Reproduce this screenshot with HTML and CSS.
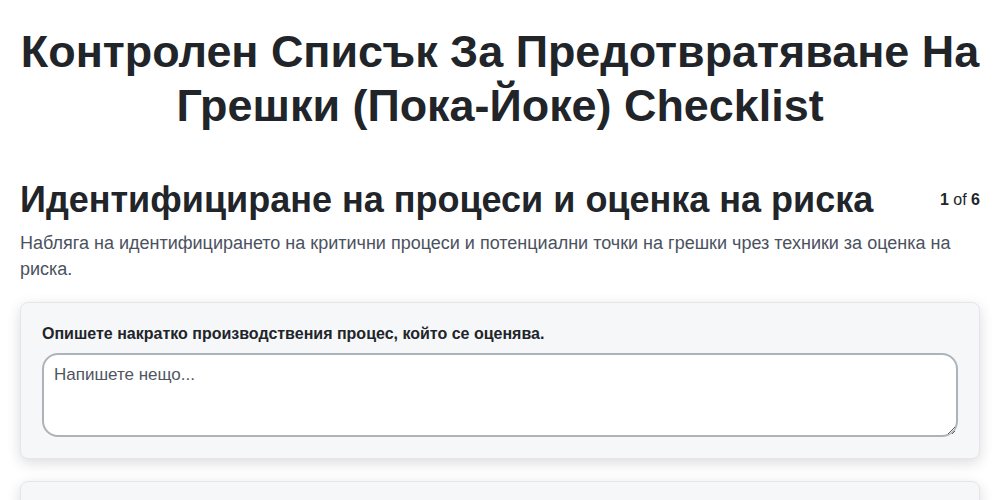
FILE: index.html
```html
<!DOCTYPE html>
<html lang="bg">
<head>
<meta charset="utf-8">
<title>Checklist</title>
<link rel="stylesheet" href="styles.css">
</head>
<body>
<main class="page">
  <h1 class="title">Контролен Списък За Предотвратяване На Грешки (Пока-Йоке) Checklist</h1>
  <section class="section">
    <header class="section-head">
      <h2 class="section-title">Идентифициране на процеси и оценка на риска</h2>
      <div class="pager"><b>1</b> of <b>6</b></div>
    </header>
    <p class="section-desc">Набляга на идентифицирането на критични процеси и потенциални точки на грешки чрез техники за оценка на риска.</p>
    <div class="cards">
      <div class="card">
        <label class="card-label" for="q1">Опишете накратко производствения процес, който се оценява.</label>
        <textarea id="q1" class="field" placeholder="Напишете нещо..."></textarea>
      </div>
      <div class="card">
        <label class="card-label" for="q2">Какви са основните етапи на процеса?</label>
        <textarea id="q2" class="field" placeholder="Напишете нещо..."></textarea>
      </div>
    </div>
  </section>
</main>
</body>
</html>
```
FILE: styles.css
```css
* { box-sizing: border-box; }
html, body { margin: 0; padding: 0; background: #ffffff; }
body {
  font-family: "Liberation Sans", Arial, sans-serif;
  color: #212529;
}
.page {
  padding: 25px 20px 20px;
}
.title {
  margin: 0 -6px;
  font-size: 44.9px;
  line-height: 54px;
  font-weight: 700;
  text-align: center;
  color: #212529;
}
.section {
  margin-top: 45px;
}
.section-head {
  display: flex;
  align-items: center;
  justify-content: space-between;
  gap: 20px;
}
.section-title {
  margin: 0;
  font-size: 36px;
  line-height: 44px;
  font-weight: 700;
  color: #212529;
}
.pager {
  font-size: 16px;
  color: #212529;
  white-space: nowrap;
}
.section-desc {
  margin: 8px 0 0;
  font-size: 18px;
  line-height: 26px;
  color: #4a5260;
}
.cards {
  margin-top: 20px;
  display: flex;
  flex-direction: column;
  gap: 22px;
}
.card {
  background: #f6f7f9;
  border: 1px solid #e4e6ea;
  border-radius: 8px;
  padding: 20px 21px 21px;
  box-shadow: 0 4px 14px rgba(0, 0, 0, 0.14);
}
.card-label {
  display: block;
  font-size: 16px;
  line-height: 22px;
  font-weight: 700;
  color: #212529;
  margin-bottom: 8px;
}
.field {
  display: block;
  width: 100%;
  height: 84px;
  border: 2px solid #adb3ba;
  border-radius: 16px;
  padding: 10px 10px;
  font-family: "Liberation Sans", Arial, sans-serif;
  font-size: 17px;
  line-height: 20px;
  color: #212529;
  background: #ffffff;
  resize: vertical;
}
.field::placeholder { color: #4f5660; opacity: 1; }
```
